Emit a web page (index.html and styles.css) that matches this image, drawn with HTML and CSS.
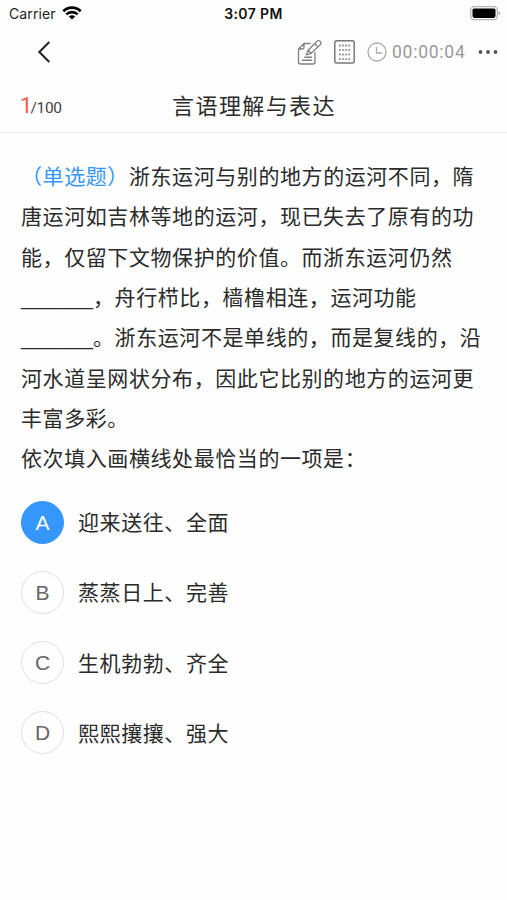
FILE: index.html
```html
<!DOCTYPE html>
<html lang="zh-CN">
<head>
<meta charset="utf-8">
<title>言语理解与表达</title>
<link rel="stylesheet" href="styles.css">
</head>
<body>
<div class="status">
  <div class="carrier"><span>Carrier</span>
    <svg width="20" height="16" viewBox="0 0 20 16" fill="none" stroke="#000" stroke-width="2.7"><path d="M1.3 6.2C6.2 1.4 13.8 1.4 18.7 6.2M4.3 9.4C7.5 6.3 12.5 6.3 15.7 9.4"/><path d="M6.8 11.4C8.7 9.8 11.3 9.8 13.2 11.4L10 14.6Z" fill="#000" stroke="none"/></svg>
  </div>
  <div class="clock">3:07 PM</div>
  <svg class="battery" width="31" height="15" viewBox="0 0 31 15"><rect x=".7" y=".7" width="26.6" height="13" rx="3.5" fill="#fff" stroke="#b4b4b4" stroke-width="1.3"/><rect x="2.5" y="2.5" width="23" height="9.4" rx="1.8"/><path d="M28.6 5v4.5q1.6-.7 1.6-2.2T28.6 5z" fill="#aaa"/></svg>
</div>
<div class="nav">
  <svg class="back" width="14" height="24" viewBox="0 0 14 24" fill="none" stroke="#222" stroke-width="2"><path d="M12.3 2 2.3 12l10 10"/></svg>
  <div class="tools">
    <svg class="note" width="25" height="27" viewBox="0 0 25 27" fill="none" stroke="#808080" stroke-width="1.3" stroke-linejoin="round" stroke-linecap="round"><path d="M13 4.500H7L1.500 10v13q0 2 2 2H16q2 0 2-2v-9.500M7 4.500V8q0 2-2 2H1.500"/><path d="M9.400 15.800l1.700-4.600 8.400-8.400q2-2.200 3.800-.4 1.500 1.800-.5 3.700l-8.500 8.200zM11.200 11.300l3 3M17.700 4.700l3.100 3.200"/><path d="M8 18.300h6.500M5.500 21.300h9" stroke-width="1.500"/></svg>
    <svg class="sheet" width="21" height="24" viewBox="0 0 21 24" fill="none" stroke="#777"><rect x=".8" y=".8" width="19.400" height="22.200" rx="2" stroke-width="1.500"/><path d="M5 5.500h11M5 10h11M5 14.500h11M5 19h11" stroke-width="1.700" stroke-dasharray="1.700 1.400"/></svg>
    <svg class="timer-icon" width="20" height="20" viewBox="0 0 20 20" fill="none" stroke="#aaa" stroke-width="1.300"><circle cx="10" cy="10" r="9"/><path d="M9.500 5v6h5.500"/></svg>
    <span class="time">00:00:04</span>
    <svg class="more" width="20" height="6" viewBox="0 0 20 6" fill="#555"><circle cx="2.500" cy="3" r="1.900"/><circle cx="10" cy="3" r="1.900"/><circle cx="17.500" cy="3" r="1.900"/></svg>
  </div>
</div>
<header class="heading">
  <div class="progress"><b>1</b>/100</div>
  <h1>言语理解与表达</h1>
</header>
<main>
  <div class="question">
    <p><span class="kind">（单选题）</span>浙东运河与别的地方的运河不同，隋<br>唐运河如吉林等地的运河，现已失去了原有的功<br>能，仅留下文物保护的价值。而浙东运河仍然<br><span class="blank">_______</span>，舟行栉比，樯橹相连，运河功能<br><span class="blank">_______</span>。浙东运河不是单线的，而是复线的，沿<br>河水道呈网状分布，因此它比别的地方的运河更<br>丰富多彩。</p>
    <p>依次填入画横线处最恰当的一项是：</p>
  </div>
  <ul class="options">
    <li class="selected"><span class="letter">A</span><span class="answer">迎来送往、全面</span></li>
    <li><span class="letter">B</span><span class="answer">蒸蒸日上、完善</span></li>
    <li><span class="letter">C</span><span class="answer">生机勃勃、齐全</span></li>
    <li><span class="letter">D</span><span class="answer">熙熙攘攘、强大</span></li>
  </ul>
</main>
</body>
</html>
```
FILE: styles.css
```css
* { box-sizing: border-box; }
body {
  margin: 0;
  height: 900px;
  overflow: hidden;
  background: #fefefe;
  color: #2b2b2b;
  font-family: Inter, "Noto Sans CJK SC", sans-serif;
}
svg { display: block; flex: none; }
p, h1, ul { margin: 0; padding: 0; }
.status {
  display: grid;
  grid-template-columns: 1fr auto 1fr;
  align-items: center;
  height: 27px;
  padding: 0 6px 0 9px;
  font-size: 14px;
  color: #222;
}
.carrier { display: flex; align-items: center; gap: 6px; letter-spacing: .1px; }
.carrier svg { margin-top: -2px; }
.clock { margin-right: 3px; font-weight: 600; color: #111; letter-spacing: .4px; }
.battery { justify-self: end; }
.nav {
  display: flex;
  align-items: center;
  justify-content: space-between;
  height: 50px;
  padding: 0 9px 0 37px;
}
.tools { display: flex; align-items: center; }
.sheet { margin-left: 12px; }
.timer-icon { margin-left: 12px; }
.time {
  width: 74px;
  margin-left: 5px;
  font: 17.5px/20px Roboto, sans-serif;
  letter-spacing: .75px;
  color: #999;
  white-space: nowrap;
}
.more { margin-left: 12px; }
.heading {
  display: grid;
  grid-template-columns: 1fr auto 1fr;
  align-items: center;
  height: 56px;
  padding: 0 20px;
  border-bottom: 1px solid #f0f0f0;
}
.progress {
  padding-top: 5px;
  font: 15.5px/24px Roboto, sans-serif;
  letter-spacing: -.3px;
  color: #444;
}
.progress b { font-size: 22px; font-weight: 400; letter-spacing: -2px; color: #f15b4c; }
h1 {
  font: 400 22px/32px "Noto Sans CJK SC", sans-serif;
  letter-spacing: 1.4px;
  padding: 0 0 1px 1px;
}
main {
  padding: 22px 0 0 21px;
  font-family: "Noto Sans CJK SC", sans-serif;
  font-size: 21px;
  letter-spacing: .58px;
}
.question { line-height: 40.35px; white-space: nowrap; }
.kind { color: #3596fb; }
.blank {
  display: inline-block;
  width: 72px;
  font-family: "Liberation Sans", sans-serif;
  font-size: 18.5px;
  line-height: 20px;
  letter-spacing: 0;
}
.options {
  display: grid;
  gap: 27.2px;
  margin-top: 23px;
  list-style: none;
}
.options li { display: flex; align-items: center; height: 43px; gap: 14px; }
.answer { padding-bottom: 2px; }
.letter {
  display: flex;
  align-items: center;
  justify-content: center;
  width: 43px;
  height: 43px;
  border: 1px solid #dedede;
  border-radius: 50%;
  font: 21px/1 "Liberation Sans", sans-serif;
  letter-spacing: 0;
  color: #666;
}
.selected .letter { background: #3596fb; border-color: #3596fb; color: #fff; }
```
